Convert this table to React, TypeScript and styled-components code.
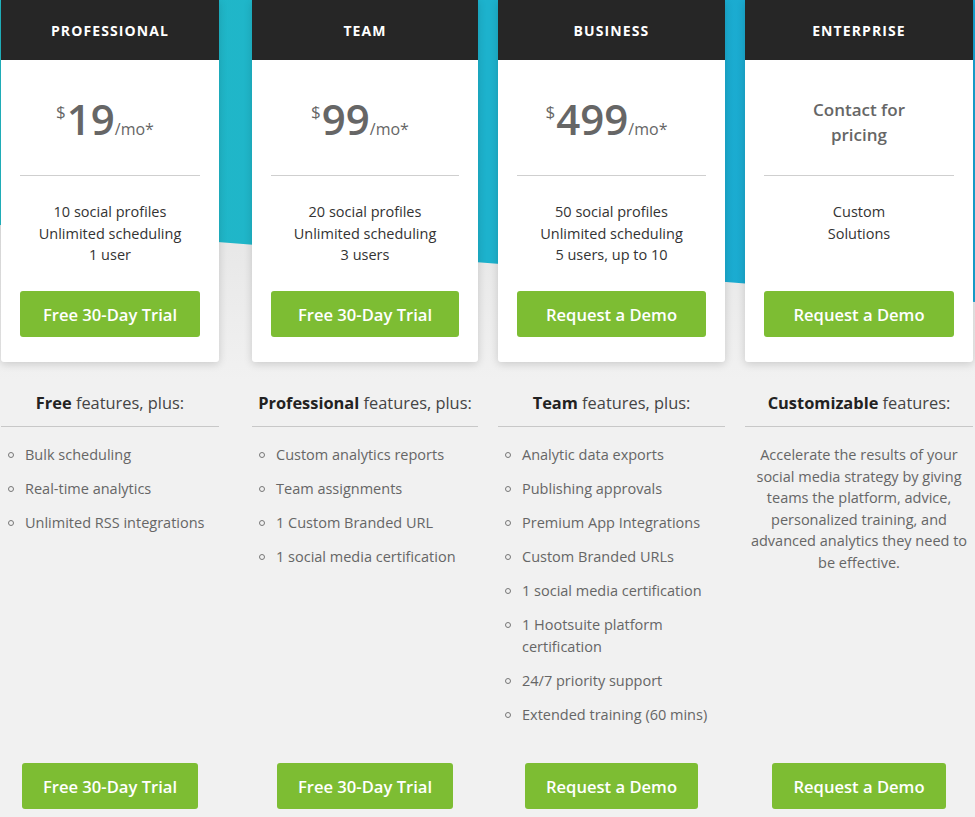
import React from 'react'
import styled, { createGlobalStyle } from 'styled-components'

const GlobalStyle = createGlobalStyle`
  html, body {
    margin: 0;
    padding: 0;
    background: #f1f1f1;
  }
  body {
    font-family: 'Open Sans', 'Noto Sans', Arial, sans-serif;
    -webkit-font-smoothing: antialiased;
  }
`

const Page = styled.div`
  position: relative;
  min-height: 817px;
  background: linear-gradient(180deg, #e6e6e6 220px, #f1f1f1 380px);
  overflow: hidden;

  /* teal band with slanted bottom edge behind the cards */
  &::before {
    content: '';
    position: absolute;
    inset: 0 0 auto 0;
    height: 310px;
    background: linear-gradient(90deg, #22bac5 0%, #1db2cd 50%, #19a5d4 100%);
    clip-path: polygon(0 0, 100% 0, 100% 302px, 50% 263px, 0 225px);
  }
`

const Grid = styled.div`
  position: relative;
  z-index: 1;
  display: grid;
  grid-template-columns: 231px 226px 227px 228px;
  column-gap: 20px;
  padding-left: 1px;
`

const Column = styled.div<{ $gapAfter?: number }>`
  display: flex;
  flex-direction: column;
  margin-right: ${({ $gapAfter }) => $gapAfter || 0}px;
`

const Card = styled.div`
  background: #fff;
  border-radius: 0 0 3px 3px;
  box-shadow: 0 2px 8px rgba(0, 0, 0, 0.16);
  overflow: hidden;
`

const CardHeader = styled.div`
  height: 60px;
  background: #262626;
  color: #fff;
  display: flex;
  align-items: center;
  justify-content: center;
  font-size: 14px;
  font-weight: 700;
  letter-spacing: 1.1px;
  text-transform: uppercase;
`

const PriceArea = styled.div`
  height: 115px;
  display: flex;
  align-items: center;
  justify-content: center;
  margin: 0 19px;
  border-bottom: 1px solid #cfcfcf;
`

const PriceRow = styled.div`
  color: #666;
  line-height: 1;
  white-space: nowrap;
  padding-right: 10px;
  margin-top: 2px;
`

const Dollar = styled.span`
  font-size: 17px;
  vertical-align: 17px;
  margin-right: 1px;
`

const Amount = styled.span`
  font-size: 42px;
  font-weight: 600;
`

const Per = styled.span`
  font-size: 16px;
  font-weight: 400;
`

const Contact = styled.div`
  color: #666;
  font-size: 17px;
  font-weight: 600;
  line-height: 25px;
  text-align: center;
  margin-top: 8px;
`

const Includes = styled.div`
  min-height: 65px;
  padding: 25px 19px;
  color: #333;
  font-size: 14.5px;
  line-height: 21.5px;
  text-align: center;
`

const Button = styled.button<{ $wide?: boolean }>`
  display: block;
  height: 46px;
  border: none;
  border-radius: 3px;
  background: #7dbd33;
  color: #fff;
  font-family: inherit;
  font-size: 16.6px;
  font-weight: 600;
  cursor: pointer;
  margin: ${({ $wide }) => ($wide ? '0 19px 25px' : '0 auto')};
  width: ${({ $wide }) => ($wide ? 'calc(100% - 38px)' : 'auto')};
  padding: ${({ $wide }) => ($wide ? '0' : '0 21px')};
`

const Features = styled.div`
  flex: 1;
  padding-top: 29px;
  padding-bottom: 25px;
`

const FeaturesTitle = styled.div`
  color: #444;
  font-size: 16.4px;
  line-height: 24px;
  text-align: center;
  padding-bottom: 11px;
  border-bottom: 1px solid #c8c8c8;

  b {
    color: #222;
    font-weight: 700;
  }
`

const List = styled.ul`
  list-style: none;
  margin: 17px 0 0;
  padding: 0;
`

const Item = styled.li`
  position: relative;
  color: #666;
  font-size: 14.5px;
  line-height: 22px;
  padding-left: 24px;
  margin-bottom: 12px;

  &::before {
    content: '';
    position: absolute;
    left: 7px;
    top: 8px;
    width: 4px;
    height: 4px;
    border: 1px solid #777;
    border-radius: 50%;
  }
`

const Blurb = styled.p`
  margin: 17px 0 0;
  color: #666;
  font-size: 14.5px;
  line-height: 21.6px;
  text-align: center;
`

type Plan = {
  name: string
  price?: string
  lines: string[]
  cta: string
  base: string
  suffix: string
  features?: string[]
  blurb?: string
  gapAfter?: number
}

const plans: Plan[] = [
  {
    name: 'Professional',
    price: '19',
    lines: ['10 social profiles', 'Unlimited scheduling', '1 user'],
    cta: 'Free 30-Day Trial',
    base: 'Free',
    suffix: ' features, plus:',
    features: ['Bulk scheduling', 'Real-time analytics', 'Unlimited RSS integrations'],
    gapAfter: 13,
  },
  {
    name: 'Team',
    price: '99',
    lines: ['20 social profiles', 'Unlimited scheduling', '3 users'],
    cta: 'Free 30-Day Trial',
    base: 'Professional',
    suffix: ' features, plus:',
    features: [
      'Custom analytics reports',
      'Team assignments',
      '1 Custom Branded URL',
      '1 social media certification',
    ],
  },
  {
    name: 'Business',
    price: '499',
    lines: ['50 social profiles', 'Unlimited scheduling', '5 users, up to 10'],
    cta: 'Request a Demo',
    base: 'Team',
    suffix: ' features, plus:',
    features: [
      'Analytic data exports',
      'Publishing approvals',
      'Premium App Integrations',
      'Custom Branded URLs',
      '1 social media certification',
      '1 Hootsuite platform certification',
      '24/7 priority support',
      'Extended training (60 mins)',
    ],
  },
  {
    name: 'Enterprise',
    lines: ['Custom', 'Solutions'],
    cta: 'Request a Demo',
    base: 'Customizable',
    suffix: ' features:',
    blurb:
      'Accelerate the results of your social media strategy by giving teams the platform, advice, personalized training, and advanced analytics they need to be effective.',
  },
]

export default function App() {
  return (
    <Page>
      <GlobalStyle />
      <Grid>
        {plans.map(plan => (
          <Column key={plan.name} $gapAfter={plan.gapAfter}>
            <Card>
              <CardHeader>{plan.name}</CardHeader>
              <PriceArea>
                {plan.price ? (
                  <PriceRow>
                    <Dollar>$</Dollar>
                    <Amount>{plan.price}</Amount>
                    <Per>/mo*</Per>
                  </PriceRow>
                ) : (
                  <Contact>
                    Contact for
                    <br />
                    pricing
                  </Contact>
                )}
              </PriceArea>
              <Includes>
                {plan.lines.map(line => (
                  <div key={line}>{line}</div>
                ))}
              </Includes>
              <Button $wide>{plan.cta}</Button>
            </Card>
            <Features>
              <FeaturesTitle>
                <b>{plan.base}</b>
                {plan.suffix}
              </FeaturesTitle>
              {plan.features && (
                <List>
                  {plan.features.map(f => (
                    <Item key={f}>{f}</Item>
                  ))}
                </List>
              )}
              {plan.blurb && <Blurb>{plan.blurb}</Blurb>}
            </Features>
            <Button>{plan.cta}</Button>
          </Column>
        ))}
      </Grid>
    </Page>
  )
}
